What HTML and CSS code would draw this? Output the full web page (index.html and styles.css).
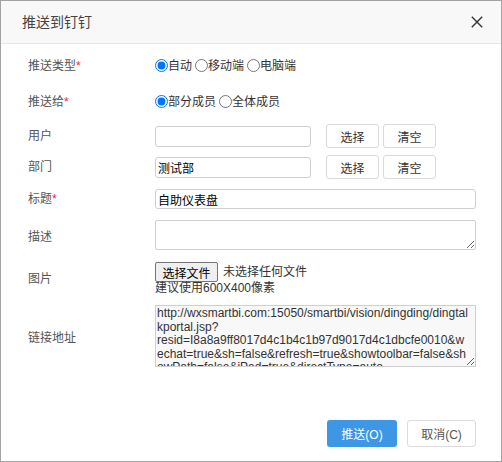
FILE: index.html
```html
<!DOCTYPE html>
<html lang="zh">
<head>
<meta charset="utf-8">
<title>推送到钉钉</title>
<link rel="stylesheet" href="styles.css">
</head>
<body>
<div class="dialog">
  <div class="header">
    <span class="title">推送到钉钉</span>
    <svg class="close" width="12" height="12" viewBox="0 0 12 12"><path d="M0.8 0.8 L11.2 11.2 M11.2 0.8 L0.8 11.2" stroke="#333" stroke-width="1.4" fill="none"/></svg>
  </div>
  <div class="body">
    <div class="row r1">
      <div class="label">推送类型<span class="req">*</span></div>
      <div class="radios">
        <label class="radio"><input type="radio" name="t" checked>自动</label>
        <label class="radio"><input type="radio" name="t">移动端</label>
        <label class="radio"><input type="radio" name="t">电脑端</label>
      </div>
    </div>
    <div class="row r2">
      <div class="label">推送给<span class="req">*</span></div>
      <div class="radios">
        <label class="radio"><input type="radio" name="g" checked>部分成员</label>
        <label class="radio"><input type="radio" name="g">全体成员</label>
      </div>
    </div>
    <div class="row r3">
      <div class="label">用户</div>
      <input class="input short" type="text" value="">
      <button class="btn first">选择</button>
      <button class="btn">清空</button>
    </div>
    <div class="row r4">
      <div class="label">部门</div>
      <input class="input short" type="text" value="测试部">
      <button class="btn first">选择</button>
      <button class="btn">清空</button>
    </div>
    <div class="row r5">
      <div class="label">标题<span class="req">*</span></div>
      <input class="input long" type="text" value="自助仪表盘">
    </div>
    <div class="row r6">
      <div class="label low">描述</div>
      <textarea class="desc"></textarea>
    </div>
    <div class="row r7">
      <div class="label">图片</div>
      <div class="file-block">
        <div class="file-line">
          <button class="file-btn">选择文件</button>
          <span class="file-none">未选择任何文件</span>
        </div>
        <div class="hint">建议使用600X400像素</div>
      </div>
    </div>
    <div class="row r8">
      <div class="label low">链接地址</div>
      <textarea class="link" readonly>http://wxsmartbi.com:15050/smartbi/vision/dingding/dingtalkportal.jsp?resid=I8a8a9ff8017d4c1b4c1b97d9017d4c1dbcfe0010&amp;wechat=true&amp;sh=false&amp;refresh=true&amp;showtoolbar=false&amp;showPath=false&amp;iPad=true&amp;directType=auto</textarea>
    </div>
  </div>
  <div class="footer">
    <button class="primary">推送(O)</button>
    <button class="cancel">取消(C)</button>
  </div>
</div>
</body>
</html>
```
FILE: styles.css
```css
html, body {
  margin: 0;
  padding: 0;
  background: #fff;
}
body {
  font-family: "Liberation Sans", "Noto Sans CJK SC", sans-serif;
  font-size: 12px;
  color: #333;
}
.dialog {
  width: 502px;
  height: 462px;
  box-sizing: border-box;
  border: 1px solid #a3a3a3;
  display: flex;
  flex-direction: column;
  background: #fff;
}
.header {
  flex-shrink: 0;
  height: 42px;
  background: #f8f8f8;
  border-bottom: 1px solid #e6e6e6;
  display: flex;
  align-items: center;
  justify-content: space-between;
  padding: 0 18px 0 21px;
}
.title {
  font-size: 14px;
  color: #444;
  line-height: 18px;
}
.close {
  display: block;
}
.body {
  padding-left: 27px;
}
.row {
  display: flex;
  align-items: center;
}
.label {
  width: 127px;
  flex-shrink: 0;
  color: #555;
  line-height: 16px;
}
.label.low {
  padding-top: 3px;
}
.req {
  color: #f5222d;
}
.r1 { margin-top: 12px; height: 20px; }
.r2 { margin-top: 16px; height: 20px; }
.r3 { margin-top: 12px; height: 24px; }
.r4 { margin-top: 7px; height: 24px; }
.r5 { margin-top: 10px; height: 20px; }
.r6 { margin-top: 11px; height: 30px; }
.r7 { margin-top: 12px; }
.r8 { margin-top: 10px; height: 62px; }

.radios {
  display: flex;
  align-items: center;
  color: #333;
}
.radio {
  display: inline-flex;
  align-items: center;
  margin-right: 3px;
  line-height: 16px;
}
.radio input {
  margin: 0;
  width: 13px;
  height: 13px;
  position: relative;
  top: -1px;
}
.input {
  box-sizing: border-box;
  height: 21px;
  border: 1px solid #cfcfcf;
  border-radius: 3px;
  padding: 0 2px;
  font-family: "Liberation Sans", "Noto Sans CJK SC", sans-serif;
  font-size: 12px;
  color: #000;
  background: #fff;
  outline: none;
}
.input.short {
  width: 156px;
}
.input.long {
  width: 321px;
  height: 20px;
}
.btn {
  box-sizing: border-box;
  width: 53px;
  height: 24px;
  border: 1px solid #d9d9d9;
  border-radius: 3px;
  background: #fff;
  color: #333;
  font-family: "Liberation Sans", "Noto Sans CJK SC", sans-serif;
  font-size: 12px;
  padding: 0;
  margin-left: 4px;
}
.btn.first {
  margin-left: 15px;
}
.desc {
  box-sizing: border-box;
  width: 321px;
  height: 30px;
  margin: 0;
  border: 1px solid #cfcfcf;
  border-radius: 2px;
  padding: 1px 2px;
  font-family: "Liberation Sans", "Noto Sans CJK SC", sans-serif;
  font-size: 12px;
  background: #fff;
  outline: none;
}
.file-block {
  display: flex;
  flex-direction: column;
}
.file-line {
  display: flex;
  align-items: center;
  height: 20px;
}
.file-btn {
  box-sizing: border-box;
  width: 63px;
  height: 20px;
  border: 1px solid #767676;
  border-radius: 2px;
  background: #efefef;
  color: #000;
  font-family: "Liberation Sans", "Noto Sans CJK SC", sans-serif;
  font-size: 12px;
  padding: 0;
}
.file-none {
  margin-left: 5px;
  color: #333;
  line-height: 16px;
}
.hint {
  line-height: 13px;
  color: #333;
}
.link {
  box-sizing: border-box;
  width: 321px;
  height: 62px;
  margin: 0;
  border: 1px solid #cfcfcf;
  padding: 1px 6px 0 1px;
  font-family: "Liberation Sans", sans-serif;
  font-size: 12px;
  line-height: 13.6px;
  color: #333;
  background: #f8f8f8;
  overflow: hidden;
  outline: none;
}
.footer {
  margin-top: auto;
  display: flex;
  justify-content: flex-end;
  gap: 10px;
  padding: 0 25px 14px 0;
}
.primary, .cancel {
  box-sizing: border-box;
  height: 27px;
  border-radius: 3px;
  font-family: "Liberation Sans", "Noto Sans CJK SC", sans-serif;
  font-size: 12px;
  padding: 0;
}
.primary {
  width: 70px;
  border: none;
  background: #3d97e5;
  color: #fff;
}
.cancel {
  width: 69px;
  border: 1px solid #dcdcdc;
  background: #fff;
  color: #555;
}
```
